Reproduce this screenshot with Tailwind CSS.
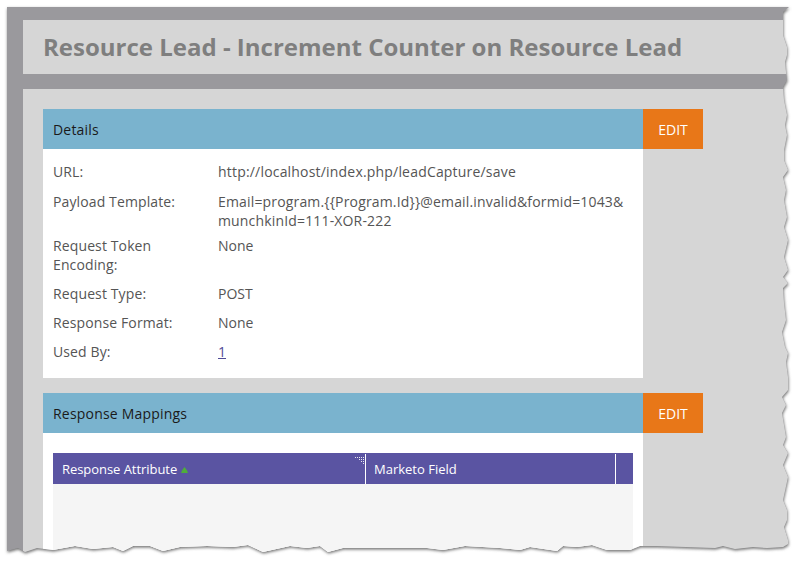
<!DOCTYPE html>
<html lang="en">
<head>
  <meta charset="UTF-8" />
  <title>Resource Lead</title>
  <script src="https://cdn.jsdelivr.net/npm/@tailwindcss/browser@4"></script>
</head>
<body class="bg-white overflow-hidden font-['Open_Sans',sans-serif]">
  <div class="relative w-[800px] h-[563px] overflow-hidden">
    <!-- torn paper edge + shadow -->
    <svg class="absolute left-0 top-0" width="800" height="563" viewBox="0 0 800 563">
      <defs>
        <filter id="soft" x="-5%" y="-5%" width="110%" height="110%"><feGaussianBlur stdDeviation="1.6" /></filter>
        <clipPath id="torn">
          <polygon points="7,7 789,7 783,12 783,35 787,47 787,55 785,62 786,72 787,80 783,87 784,100 787,115 785,125 787,135 784,150 784,160 788,170 783,177 786,190 784,200 787,217 784,227 788,240 784,257 788,270 783,277 788,283 783,288 784,303 786,320 782,332 785,347 788,353 786,362 788,377 788,390 782,397 786,405 782,413 786,437 783,445 788,453 783,465 788,477 783,500 787,510 787,520 784,527 788,540 788,544 783,547 767,548 753,547 735,549 723,546 715,548 657,546 640,546 630,550 607,550 592,545 577,547 563,546 557,551 530,547 520,550 500,548 465,546 443,550 427,548 400,548 343,548 328,552 320,546 307,548 290,546 263,552 248,545 233,547 207,546 180,547 163,551 150,546 133,546 123,551 113,547 93,549 75,546 53,550 37,548 25,552 18,548 7,551" />
        </clipPath>
      </defs>
      <polygon fill="#6f6f6f" filter="url(#soft)" transform="translate(0.5 1.5)" points="7,7 789,7 783,12 783,35 787,47 787,55 785,62 786,72 787,80 783,87 784,100 787,115 785,125 787,135 784,150 784,160 788,170 783,177 786,190 784,200 787,217 784,227 788,240 784,257 788,270 783,277 788,283 783,288 784,303 786,320 782,332 785,347 788,353 786,362 788,377 788,390 782,397 786,405 782,413 786,437 783,445 788,453 783,465 788,477 783,500 787,510 787,520 784,527 788,540 788,544 783,547 767,548 753,547 735,549 723,546 715,548 657,546 640,546 630,550 607,550 592,545 577,547 563,546 557,551 530,547 520,550 500,548 465,546 443,550 427,548 400,548 343,548 328,552 320,546 307,548 290,546 263,552 248,545 233,547 207,546 180,547 163,551 150,546 133,546 123,551 113,547 93,549 75,546 53,550 37,548 25,552 18,548 7,551" />
    </svg>

    <div class="relative w-[800px] h-[563px] pl-[7px] pt-[7px] [clip-path:url(#torn)]">
      <div class="w-[793px] h-[556px] bg-[#9a999d] pl-[16px] pt-[13px]">
        <div class="h-[54px] bg-[#d6d6d6] pl-[20px] flex items-center">
          <h1 class="text-[24px] font-bold text-[#7f7f7f] leading-none">Resource Lead - Increment Counter on Resource Lead</h1>
        </div>
        <div class="mt-[15px] h-[480px] bg-[#d6d6d6] pl-[20px] pt-[20px] text-[14px] leading-[19px] text-[#555555]">
          <div class="flex h-[40px] w-[660px]">
            <div class="w-[600px] bg-[#7ab3ce] pl-[10px] flex items-center text-[#1a1a1a] tracking-[0.2px]">Details</div>
            <div class="w-[60px] bg-[#e87718] text-white flex items-center justify-center">EDIT</div>
          </div>
          <div class="w-[600px] bg-white pl-[10px] pt-[14px] pb-[17px] flex flex-col gap-[10px]">
            <div class="flex -mt-[1px] mb-[1px]"><div class="w-[165px] tracking-[0.12px]">URL:</div><div class="tracking-[0.19px]">http://localhost/index.php/leadCapture/save</div></div>
            <div class="flex -mb-[4px]"><div class="w-[165px] tracking-[0.12px]">Payload Template:</div><div class="w-[415px] tracking-[0.16px]">Email=program.{{Program.Id}}@email.invalid&amp;formid=1043&amp;<br>munchkinId=111-XOR-222</div></div>
            <div class="flex"><div class="w-[165px] tracking-[0.12px]">Request Token<br>Encoding:</div><div>None</div></div>
            <div class="flex"><div class="w-[165px] tracking-[0.12px]">Request Type:</div><div>POST</div></div>
            <div class="flex"><div class="w-[165px] tracking-[0.12px]">Response Format:</div><div>None</div></div>
            <div class="flex"><div class="w-[165px] tracking-[0.12px]">Used By:</div><a href="#" class="underline text-[#4f4a96]">1</a></div>
          </div>

          <div class="flex h-[40px] w-[660px] mt-[15px]">
            <div class="w-[600px] bg-[#7ab3ce] pl-[10px] flex items-center text-[#1a1a1a] tracking-[0.2px]">Response Mappings</div>
            <div class="w-[60px] bg-[#e87718] text-white flex items-center justify-center">EDIT</div>
          </div>
          <div class="w-[600px] h-[140px] bg-white pl-[10px] pt-[20px]">
            <div class="w-[580px] h-[120px] bg-[#f5f5f5]">
              <div class="flex h-[31px] bg-[#5a54a2] text-white text-[13px]">
                <div class="relative w-[313px] h-[30px] mt-[1px] border-r border-white pl-[9px] flex items-center">
                  <span class="tracking-[-0.05px]">Response Attribute</span>
                  <svg class="ml-[4px] mt-[2px]" width="7" height="6" viewBox="0 0 8 7"><path d="M4 0 L7 4 L8 7 H0 L1 4 Z" fill="#4fae3a" /></svg>
                  <svg class="absolute right-[1px] top-[2px]" width="9" height="9" viewBox="0 0 9 9" fill="#e8e8f0"><rect x="0" y="1" width="1" height="1" /><rect x="2" y="1" width="1" height="1" /><rect x="4" y="1" width="1" height="1" /><rect x="6" y="1" width="1" height="1" /><rect x="8" y="1" width="1" height="1" /><rect x="4" y="3" width="1" height="1" /><rect x="6" y="3" width="1" height="1" /><rect x="8" y="3" width="1" height="1" /><rect x="6" y="5" width="1" height="1" /><rect x="8" y="5" width="1" height="1" /><rect x="8" y="7" width="1" height="1" /></svg>
                </div>
                <div class="w-[250px] h-[30px] mt-[1px] border-r border-white pl-[8px] flex items-center">Marketo Field</div>
              </div>
            </div>
          </div>
        </div>
      </div>
    </div>
  </div>
</body>
</html>
